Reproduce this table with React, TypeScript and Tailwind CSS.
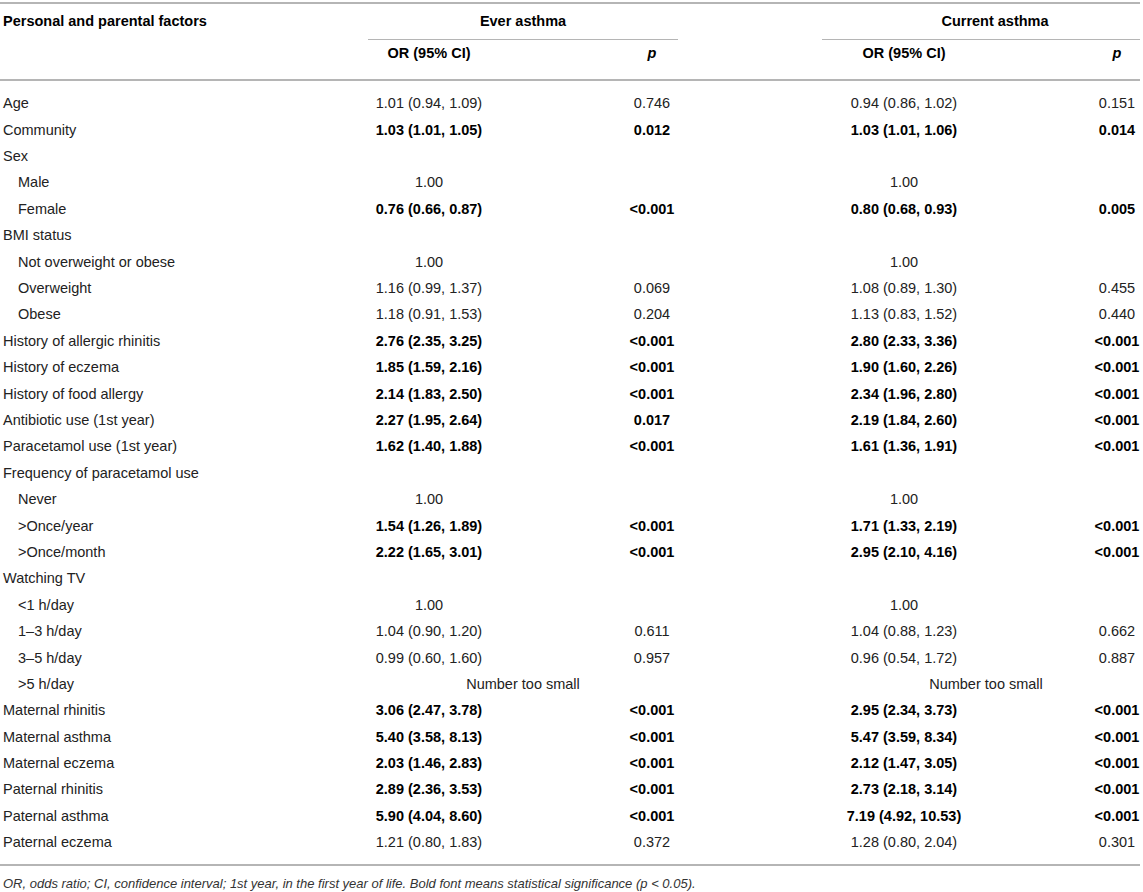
type Row = {
  label: string;
  indent?: boolean;
  e?: string;
  ep?: string;
  c?: string;
  cp?: string;
  eb?: boolean;
  cb?: boolean;
  small?: boolean;
};

const rows: Row[] = [
  { label: 'Age', e: '1.01 (0.94, 1.09)', ep: '0.746', c: '0.94 (0.86, 1.02)', cp: '0.151' },
  { label: 'Community', e: '1.03 (1.01, 1.05)', ep: '0.012', eb: true, c: '1.03 (1.01, 1.06)', cp: '0.014', cb: true },
  { label: 'Sex' },
  { label: 'Male', indent: true, e: '1.00', c: '1.00' },
  { label: 'Female', indent: true, e: '0.76 (0.66, 0.87)', ep: '<0.001', eb: true, c: '0.80 (0.68, 0.93)', cp: '0.005', cb: true },
  { label: 'BMI status' },
  { label: 'Not overweight or obese', indent: true, e: '1.00', c: '1.00' },
  { label: 'Overweight', indent: true, e: '1.16 (0.99, 1.37)', ep: '0.069', c: '1.08 (0.89, 1.30)', cp: '0.455' },
  { label: 'Obese', indent: true, e: '1.18 (0.91, 1.53)', ep: '0.204', c: '1.13 (0.83, 1.52)', cp: '0.440' },
  { label: 'History of allergic rhinitis', e: '2.76 (2.35, 3.25)', ep: '<0.001', eb: true, c: '2.80 (2.33, 3.36)', cp: '<0.001', cb: true },
  { label: 'History of eczema', e: '1.85 (1.59, 2.16)', ep: '<0.001', eb: true, c: '1.90 (1.60, 2.26)', cp: '<0.001', cb: true },
  { label: 'History of food allergy', e: '2.14 (1.83, 2.50)', ep: '<0.001', eb: true, c: '2.34 (1.96, 2.80)', cp: '<0.001', cb: true },
  { label: 'Antibiotic use (1st year)', e: '2.27 (1.95, 2.64)', ep: '0.017', eb: true, c: '2.19 (1.84, 2.60)', cp: '<0.001', cb: true },
  { label: 'Paracetamol use (1st year)', e: '1.62 (1.40, 1.88)', ep: '<0.001', eb: true, c: '1.61 (1.36, 1.91)', cp: '<0.001', cb: true },
  { label: 'Frequency of paracetamol use' },
  { label: 'Never', indent: true, e: '1.00', c: '1.00' },
  { label: '>Once/year', indent: true, e: '1.54 (1.26, 1.89)', ep: '<0.001', eb: true, c: '1.71 (1.33, 2.19)', cp: '<0.001', cb: true },
  { label: '>Once/month', indent: true, e: '2.22 (1.65, 3.01)', ep: '<0.001', eb: true, c: '2.95 (2.10, 4.16)', cp: '<0.001', cb: true },
  { label: 'Watching TV' },
  { label: '<1 h/day', indent: true, e: '1.00', c: '1.00' },
  { label: '1–3 h/day', indent: true, e: '1.04 (0.90, 1.20)', ep: '0.611', c: '1.04 (0.88, 1.23)', cp: '0.662' },
  { label: '3–5 h/day', indent: true, e: '0.99 (0.60, 1.60)', ep: '0.957', c: '0.96 (0.54, 1.72)', cp: '0.887' },
  { label: '>5 h/day', indent: true, small: true },
  { label: 'Maternal rhinitis', e: '3.06 (2.47, 3.78)', ep: '<0.001', eb: true, c: '2.95 (2.34, 3.73)', cp: '<0.001', cb: true },
  { label: 'Maternal asthma', e: '5.40 (3.58, 8.13)', ep: '<0.001', eb: true, c: '5.47 (3.59, 8.34)', cp: '<0.001', cb: true },
  { label: 'Maternal eczema', e: '2.03 (1.46, 2.83)', ep: '<0.001', eb: true, c: '2.12 (1.47, 3.05)', cp: '<0.001', cb: true },
  { label: 'Paternal rhinitis', e: '2.89 (2.36, 3.53)', ep: '<0.001', eb: true, c: '2.73 (2.18, 3.14)', cp: '<0.001', cb: true },
  { label: 'Paternal asthma', e: '5.90 (4.04, 8.60)', ep: '<0.001', eb: true, c: '7.19 (4.92, 10.53)', cp: '<0.001', cb: true },
  { label: 'Paternal eczema', e: '1.21 (0.80, 1.83)', ep: '0.372', c: '1.28 (0.80, 2.04)', cp: '0.301' },
];

// label | OR1 | gap | p1 | gap | OR2 | gap | p2
const cols = 'grid grid-cols-[368px_122px_136px_52px_144px_164px_108px_46px]';

export default function App() {
  return (
    <div className="w-[1143px] bg-white text-[14.5px] text-[#222] font-['Liberation_Sans',Arial,sans-serif]">
      <div className="pt-[2px]">
        <div className="w-[1140px] border-t-2 border-[#b5b5b5]">
          <div className={`${cols} h-[36px] items-center font-bold text-black`}>
            <div className="pl-[3px]">Personal and parental factors</div>
            <div className="col-span-3 flex h-full flex-col">
              <div className="flex flex-1 items-center justify-center">Ever asthma</div>
              <div className="h-px bg-[#b5b5b5]" />
            </div>
            <div />
            <div className="col-span-3 flex h-full flex-col">
              <div className="flex flex-1 items-center justify-center pl-[28px]">Current asthma</div>
              <div className="h-px bg-[#b5b5b5]" />
            </div>
          </div>
          <div className={`${cols} h-[39px] items-start pt-[3px] font-bold text-black`}>
            <div />
            <div className="text-center">OR (95% CI)</div>
            <div />
            <div className="text-center italic">p</div>
            <div />
            <div className="text-center">OR (95% CI)</div>
            <div />
            <div className="text-center italic">p</div>
          </div>
          <div className="border-t-2 border-[#b5b5b5] pt-[10px] pb-[8px]">
            {rows.map((r) => (
              <div key={r.label} className={`${cols} h-[26.4px] items-center`}>
                <div className={r.indent ? 'pl-[18px]' : 'pl-[3px]'}>{r.label}</div>
                {r.small ? (
                  <>
                    <div className="col-span-3 text-center">Number too small</div>
                    <div />
                    <div className="col-span-3 pl-[10px] text-center">Number too small</div>
                  </>
                ) : (
                  <>
                    <div className={`text-center whitespace-nowrap ${r.eb ? 'font-bold text-black' : ''}`}>{r.e}</div>
                    <div />
                    <div className={`text-center whitespace-nowrap ${r.eb ? 'font-bold text-black' : ''}`}>{r.ep}</div>
                    <div />
                    <div className={`text-center whitespace-nowrap ${r.cb ? 'font-bold text-black' : ''}`}>{r.c}</div>
                    <div />
                    <div className={`text-center whitespace-nowrap ${r.cb ? 'font-bold text-black' : ''}`}>{r.cp}</div>
                  </>
                )}
              </div>
            ))}
          </div>
          <div className="border-t-2 border-[#b5b5b5]" />
        </div>
        <div className="pt-[10px] pl-[3px] text-[13px] leading-[16px] italic text-[#333]">
          OR, odds ratio; CI, confidence interval; 1st year, in the first year of life. Bold font means statistical significance (p &lt; 0.05).
        </div>
      </div>
    </div>
  );
}
